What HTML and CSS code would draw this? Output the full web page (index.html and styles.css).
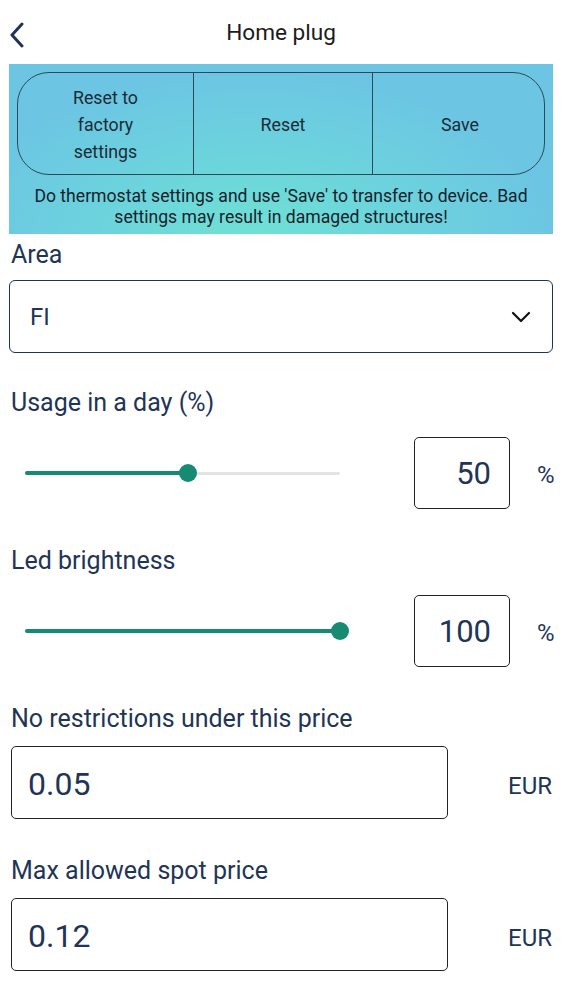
FILE: index.html
```html
<!DOCTYPE html>
<html>
<head>
<meta charset="utf-8">
<link rel="stylesheet" href="styles.css">
</head>
<body>
<div class="header">
  <svg class="back" width="16" height="26" viewBox="0 0 16 26"><path d="M13 2 L3 13 L13 24" fill="none" stroke="#1f3557" stroke-width="3" stroke-linecap="round" stroke-linejoin="round"/></svg>
  <div class="title">Home plug</div>
</div>
<div class="banner">
  <div class="btn-group">
    <div class="btn">Reset to<br>factory<br>settings</div>
    <div class="btn">Reset</div>
    <div class="btn">Save</div>
  </div>
  <div class="warning">Do thermostat settings and use 'Save' to transfer to device. Bad settings may result in damaged structures!</div>
</div>

<div class="label first">Area</div>
<div class="select">
  <span>FI</span>
  <svg width="20" height="12" viewBox="0 0 20 12"><path d="M2 2 L10 10 L18 2" fill="none" stroke="#111" stroke-width="2.2" stroke-linecap="round" stroke-linejoin="round"/></svg>
</div>

<div class="label">Usage in a day (%)</div>
<div class="slider-row">
  <div class="slider">
    <div class="track"></div>
    <div class="active" style="width:163px"></div>
    <div class="thumb" style="left:163px"></div>
  </div>
  <div class="numbox">50</div>
  <div class="unit">%</div>
</div>

<div class="label after-slider">Led brightness</div>
<div class="slider-row">
  <div class="slider">
    <div class="track"></div>
    <div class="active" style="width:315px"></div>
    <div class="thumb" style="left:315px"></div>
  </div>
  <div class="numbox">100</div>
  <div class="unit">%</div>
</div>

<div class="label after-slider">No restrictions under this price</div>
<div class="price-row">
  <div class="price">0.05</div>
  <div class="cur">EUR</div>
</div>

<div class="label after-price">Max allowed spot price</div>
<div class="price-row">
  <div class="price">0.12</div>
  <div class="cur">EUR</div>
</div>
</body>
</html>
```

FILE: styles.css
```css
* { box-sizing: border-box; }
body {
  margin: 0;
  width: 562px;
  background: #fff;
  font-family: Roboto, "Noto Sans", sans-serif;
  color: #1f3557;
}
.header {
  position: relative;
  height: 64px;
  display: flex;
  align-items: center;
  justify-content: center;
}
.back {
  position: absolute;
  left: 9px;
  top: 22px;
}
.title {
  font-size: 22.6px;
  color: #1c1c1c;
  margin-top: 1px;
}
.banner {
  margin: 0 9px;
  height: 170px;
  padding: 8px 8px 0 8px;
  background: radial-gradient(ellipse 300px 170px at 245px 180px, #70e2d3 0%, #6cd4dc 50%, #6cc6e3 100%);
}
.btn-group {
  display: grid;
  grid-template-columns: 175px 179px 175px;
  height: 103px;
  border: 1.3px solid #2c4a58;
  border-radius: 32px;
  overflow: hidden;
}
.btn {
  display: flex;
  align-items: center;
  justify-content: center;
  text-align: center;
  font-size: 17.8px;
  line-height: 27px;
  color: #1d2b36;
  padding-top: 2px;
}
.btn + .btn { border-left: 1.3px solid #2c4a58; }
.warning {
  text-align: center;
  font-size: 17.6px;
  line-height: 21px;
  color: #16232c;
  padding: 11px 6px 0;
}
.label {
  font-size: 25px;
  line-height: 28px;
  padding-left: 11px;
  margin-top: 36px;
}
.label.first { margin-top: 7px; }
.label.after-slider { margin-top: 38px; }
.label.after-price { margin-top: 38px; }
.select {
  margin: 11px 9px 0;
  height: 73px;
  border: 1.6px solid #1f3557;
  border-radius: 6px;
  display: flex;
  align-items: center;
  justify-content: space-between;
  padding: 0 21px 0 20px;
  font-size: 24px;
  color: #1f3557;
}
.slider-row {
  display: flex;
  align-items: center;
  margin-top: 20px;
  padding-left: 25px;
  height: 72px;
}
.slider {
  position: relative;
  width: 315px;
  height: 20px;
}
.track {
  position: absolute;
  left: 0; right: 0; top: 8.5px;
  height: 3px;
  background: #e4e4e4;
  border-radius: 2px;
}
.active {
  position: absolute;
  left: 0; top: 8px;
  height: 4px;
  background: #178a74;
  border-radius: 2px;
}
.thumb {
  position: absolute;
  top: 1px;
  width: 18px;
  height: 18px;
  margin-left: -9px;
  border-radius: 50%;
  background: #178a74;
}
.numbox {
  margin-left: 74px;
  width: 96px;
  height: 72px;
  border: 1.6px solid #222;
  border-radius: 5px;
  display: flex;
  align-items: center;
  justify-content: flex-end;
  padding-right: 18px;
  font-size: 31px;
  color: #1f3557;
}
.unit {
  margin-left: 27px;
  font-size: 24px;
  color: #1f3557;
  padding-top: 3px;
}
.price-row {
  display: flex;
  align-items: center;
  margin-top: 13px;
  padding: 0 10px 0 11px;
}
.price {
  width: 437px;
  height: 73px;
  border: 1.6px solid #222;
  border-radius: 5px;
  display: flex;
  align-items: center;
  padding-left: 16px;
  padding-top: 3px;
  font-size: 32px;
  color: #1f3557;
}
.cur {
  margin-left: auto;
  font-size: 24px;
  color: #1f3557;
  padding-top: 6px;
}
```
